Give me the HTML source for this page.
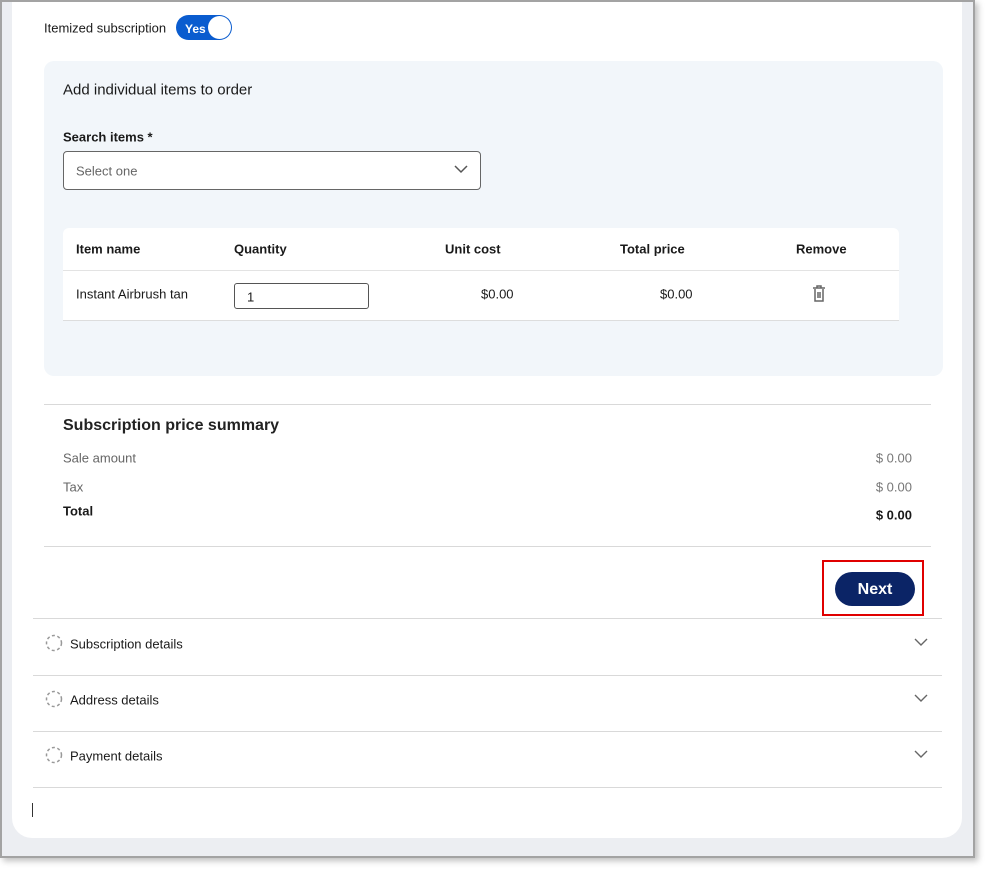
<!DOCTYPE html>
<html><head><meta charset="utf-8"><style>
*{margin:0;padding:0;box-sizing:border-box}
body{width:988px;height:869px;background:#fff;font-family:"Liberation Sans",Arial,sans-serif;color:#1a1a1a;position:relative;overflow:hidden}
.a{position:absolute}
.t{position:absolute;white-space:nowrap;line-height:1;transform:translateY(-50%)}
.hr{position:absolute;height:1px;background:#d9d9d9}
</style></head><body>
<div class="a" style="left:0;top:0;width:975px;height:858px;border:2px solid #a3a3a3;background:#eceef2;box-shadow:3px 3px 6px rgba(0,0,0,.25)"></div>
<div class="a" style="left:12px;top:2px;width:950px;height:836px;background:#fff;border-radius:0 0 20px 20px"></div>

<div class="t" style="left:44px;top:28px;font-size:13px">Itemized subscription</div>
<div class="a" style="left:176px;top:15px;width:56px;height:25px;border-radius:13px;background:#0a5ccf"></div>
<div class="t" style="left:185px;top:29px;font-size:12px;color:#fff;font-weight:bold">Yes</div>
<div class="a" style="left:208px;top:16px;width:23px;height:23px;border-radius:50%;background:#fff"></div>

<div class="a" style="left:44px;top:61px;width:899px;height:315px;background:#f2f6fa;border-radius:10px"></div>
<div class="t" style="left:63px;top:90px;font-size:15px">Add individual items to order</div>
<div class="t" style="left:63px;top:137px;font-size:13px;font-weight:bold">Search items *</div>
<div class="a" style="left:63px;top:151px;width:418px;height:39px;border:1px solid #666;border-radius:4px;background:#fff"></div>
<div class="t" style="left:76px;top:171px;font-size:13px;color:#666">Select one</div>
<svg class="a" style="left:454px;top:164px" width="14" height="10"><path d="M1 2l6 6 6-6" fill="none" stroke="#555" stroke-width="1.5"/></svg>

<div class="a" style="left:63px;top:228px;width:836px;height:93px;background:#fff;border-radius:6px 6px 0 0;border-bottom:1px solid #ddd"></div>
<div class="hr" style="left:63px;top:270px;width:836px;background:#e3e3e3"></div>
<div class="t" style="left:76px;top:249px;font-size:13px;font-weight:bold">Item name</div>
<div class="t" style="left:234px;top:249px;font-size:13px;font-weight:bold">Quantity</div>
<div class="t" style="left:445px;top:249px;font-size:13px;font-weight:bold">Unit cost</div>
<div class="t" style="left:620px;top:249px;font-size:13px;font-weight:bold">Total price</div>
<div class="t" style="left:796px;top:249px;font-size:13px;font-weight:bold">Remove</div>
<div class="t" style="left:76px;top:294px;font-size:13px">Instant Airbrush tan</div>
<div class="a" style="left:234px;top:283px;width:135px;height:26px;border:1px solid #555;border-radius:3px"></div>
<div class="t" style="left:247px;top:297px;font-size:13px">1</div>
<div class="t" style="left:481px;top:294px;font-size:13px">$0.00</div>
<div class="t" style="left:660px;top:294px;font-size:13px">$0.00</div>
<svg class="a" style="left:812px;top:285px" width="14" height="18"><path d="M1 3h12M5 3V1h4v2M3 4v12h8V4M6 7v6M8 7v6" fill="none" stroke="#666" stroke-width="1.5"/></svg>

<div class="hr" style="left:44px;top:404px;width:887px"></div>
<div class="t" style="left:63px;top:426px;font-size:16px;font-weight:bold;color:#222">Subscription price summary</div>
<div class="t" style="left:63px;top:458px;font-size:13px;color:#666">Sale amount</div>
<div class="t" style="right:76px;top:458px;font-size:13px;color:#777">$ 0.00</div>
<div class="t" style="left:63px;top:487px;font-size:13px;color:#666">Tax</div>
<div class="t" style="right:76px;top:487px;font-size:13px;color:#777">$ 0.00</div>
<div class="t" style="left:63px;top:511px;font-size:13px;font-weight:bold">Total</div>
<div class="t" style="right:76px;top:515px;font-size:13px;font-weight:bold">$ 0.00</div>
<div class="hr" style="left:44px;top:546px;width:887px"></div>

<div class="a" style="left:822px;top:560px;width:102px;height:56px;border:2px solid #e00000"></div>
<div class="a" style="left:835px;top:572px;width:80px;height:34px;border-radius:17px;background:#0b2466"></div>
<div class="t" style="left:835px;top:590px;width:80px;text-align:center;font-size:16px;font-weight:bold;color:#fff">Next</div>

<div class="hr" style="left:33px;top:618px;width:909px"></div>
<div class="hr" style="left:33px;top:675px;width:909px"></div>
<div class="hr" style="left:33px;top:731px;width:909px"></div>
<div class="hr" style="left:33px;top:787px;width:909px"></div>
<svg class="a" style="left:45px;top:634px" width="18" height="18"><circle cx="9" cy="9" r="7.5" fill="none" stroke="#999" stroke-width="1.5" stroke-dasharray="3 2.5"/></svg>
<svg class="a" style="left:45px;top:690px" width="18" height="18"><circle cx="9" cy="9" r="7.5" fill="none" stroke="#999" stroke-width="1.5" stroke-dasharray="3 2.5"/></svg>
<svg class="a" style="left:45px;top:746px" width="18" height="18"><circle cx="9" cy="9" r="7.5" fill="none" stroke="#999" stroke-width="1.5" stroke-dasharray="3 2.5"/></svg>
<div class="t" style="left:70px;top:644px;font-size:13px">Subscription details</div>
<div class="t" style="left:70px;top:700px;font-size:13px">Address details</div>
<div class="t" style="left:70px;top:756px;font-size:13px">Payment details</div>
<svg class="a" style="left:914px;top:638px" width="14" height="9"><path d="M1 1l6 6 6-6" fill="none" stroke="#666" stroke-width="1.4"/></svg>
<svg class="a" style="left:914px;top:694px" width="14" height="9"><path d="M1 1l6 6 6-6" fill="none" stroke="#666" stroke-width="1.4"/></svg>
<svg class="a" style="left:914px;top:750px" width="14" height="9"><path d="M1 1l6 6 6-6" fill="none" stroke="#666" stroke-width="1.4"/></svg>
<div class="a" style="left:32px;top:803px;width:1px;height:14px;background:#333"></div>
</body></html>
